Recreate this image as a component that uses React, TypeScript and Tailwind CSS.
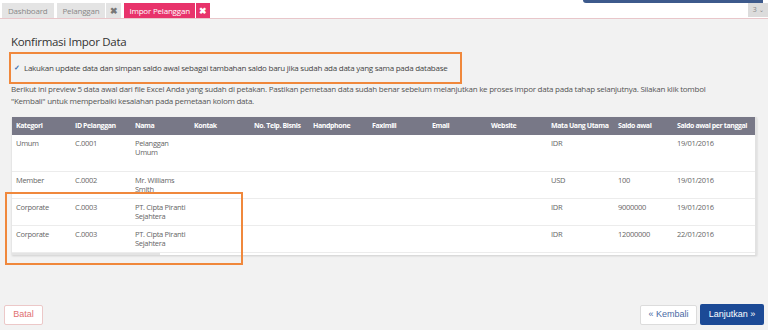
import React from 'react';

const cols = [
  { label: 'Kategori', w: 'w-[59px]' },
  { label: 'ID Pelanggan', w: 'w-[60px]' },
  { label: 'Nama', w: 'w-[59px]' },
  { label: 'Kontak', w: 'w-[60px]' },
  { label: 'No. Telp. Bisnis', w: 'w-[59px]' },
  { label: 'Handphone', w: 'w-[59px]' },
  { label: 'Faximili', w: 'w-[60px]' },
  { label: 'Email', w: 'w-[59px]' },
  { label: 'Website', w: 'w-[60px]' },
  { label: 'Mata Uang Utama', w: 'w-[67px]' },
  { label: 'Saldo awal', w: 'w-[59px]' },
  { label: 'Saldo awal per tanggal', w: 'w-[82px]' },
];

const rows = [
  { h: 'h-[36px]', cells: ['Umum', 'C.0001', 'Pelanggan Umum', '', '', '', '', '', '', 'IDR', '', '19/01/2016'] },
  { h: 'h-[27px]', cells: ['Member', 'C.0002', 'Mr. Williams Smith', '', '', '', '', '', '', 'USD', '100', '19/01/2016'] },
  { h: 'h-[27px]', cells: ['Corporate', 'C.0003', 'PT. Cipta Piranti Sejahtera', '', '', '', '', '', '', 'IDR', '9000000', '19/01/2016'] },
  { h: 'h-[27px]', cells: ['Corporate', 'C.0003', 'PT. Cipta Piranti Sejahtera', '', '', '', '', '', '', 'IDR', '12000000', '22/01/2016'] },
];

const App: React.FC = () => {
  return (
    <div className="relative w-[768px] h-[330px] overflow-hidden bg-[#f2f2f2] font-['Open_Sans',sans-serif] text-[#555]">
      {/* cropped header strip */}
      <div className="absolute top-0 left-[583px] w-[180px] h-[3px] rounded-bl-[6px] bg-[#3d5a8c]" />

      {/* Tabs */}
      <div className="flex items-end h-[19px] bg-white border-b border-[#e8c6ca] pl-[2px] gap-[3px] text-[8px] tracking-[-0.2px]">
        <div className="h-[15px] px-[6px] flex items-center bg-[#e4e4e4] text-[#888]">Dashboard</div>
        <div className="flex gap-[1px]">
          <div className="h-[15px] px-[6px] flex items-center bg-[#e4e4e4] text-[#888]">Pelanggan</div>
          <div className="h-[15px] w-[15px] flex items-center justify-center bg-[#e4e4e4] text-[#777] font-bold text-[9px]">✖</div>
        </div>
        <div className="flex gap-[1px]">
          <div className="h-[15px] px-[5px] flex items-center bg-[#e8336b] text-white">Impor Pelanggan</div>
          <div className="h-[15px] w-[14px] flex items-center justify-center bg-[#e8336b] text-white font-bold text-[9px]">✖</div>
        </div>
        <div className="ml-auto mb-[1px] h-[14px] w-[20px] flex items-center justify-center gap-[2px] bg-[#dcdcdc] text-[#888] text-[7px]">
          3 <span className="text-[6px]">⌄</span>
        </div>
      </div>

      <div className="px-[11px] pt-[15px]">
        <h1 className="text-[11.5px] leading-[16px] tracking-[-0.3px] text-[#333]">Konfirmasi Impor Data</h1>

        <div className="mt-[2px] -ml-[2px] w-[453px] h-[32px] border-2 border-[#f0883c] flex items-center pl-[2px] gap-[3px] text-[8px] tracking-[-0.25px] text-[#444] whitespace-nowrap">
          <span className="w-[8px] h-[8px] flex items-center justify-center text-[7px] text-[#3a6fb0] font-bold">✓</span>
          <span>Lakukan update data dan simpan saldo awal sebagai tambahan saldo baru jika sudah ada data yang sama pada database</span>
        </div>

        <p className="mt-[-1px] w-[728px] text-[8px] leading-[12px] tracking-[-0.25px] text-[#555]">
          Berikut ini preview 5 data awal dari file Excel Anda yang sudah di petakan. Pastikan pemetaan data sudah benar sebelum melanjutkan ke proses impor data pada tahap selanjutnya. Silakan klik tombol "Kembali" untuk memperbaiki kesalahan pada pemetaan kolom data.
        </p>

        <div className="mt-[10px] ml-[1px] w-[745px] bg-white shadow-[0_1px_2px_rgba(0,0,0,0.15)] border-r-2 border-[#e2e2e2]">
          <table className="table-fixed border-collapse w-[743px]">
            <thead>
              <tr className="h-[18px] bg-[#787887]">
                {cols.map((c) => (
                  <th key={c.label} className={`${c.w} text-left pl-[4px] text-[7px] tracking-[-0.4px] font-bold text-white whitespace-nowrap`}>
                    {c.label}
                  </th>
                ))}
              </tr>
            </thead>
            <tbody>
              {rows.map((r, i) => (
                <tr key={i} className={`${r.h} border-b border-[#ececec] align-top`}>
                  {r.cells.map((v, j) => (
                    <td key={j} className="pl-[4px] pr-[2px] pt-[4px] text-[7.5px] leading-[9px] tracking-[-0.3px] text-[#666]">
                      {v}
                    </td>
                  ))}
                </tr>
              ))}
            </tbody>
          </table>
          <div className="h-[2px] w-[148px] bg-[#e4e4e4]" />
        </div>
      </div>

      {/* highlight over duplicate rows */}
      <div className="absolute left-[5px] top-[192px] w-[238px] h-[73px] border-2 border-[#f0883c]" />

      {/* Footer */}
      <div className="absolute left-0 right-0 bottom-[5px] flex items-center px-[4px] font-['Liberation_Sans',sans-serif] text-[9px]">
        <button className="h-[20px] w-[39px] bg-white border border-[#ecc8c8] rounded-[2px] text-[#e07070]">Batal</button>
        <button className="ml-auto h-[20px] w-[57px] bg-white border border-[#dcdcdc] rounded-[2px] text-[#4a6aa5]">« Kembali</button>
        <button className="ml-[3px] h-[21px] w-[64px] bg-[#1c4a96] rounded-[2px] text-white">Lanjutkan »</button>
      </div>
    </div>
  );
};

export default App;
